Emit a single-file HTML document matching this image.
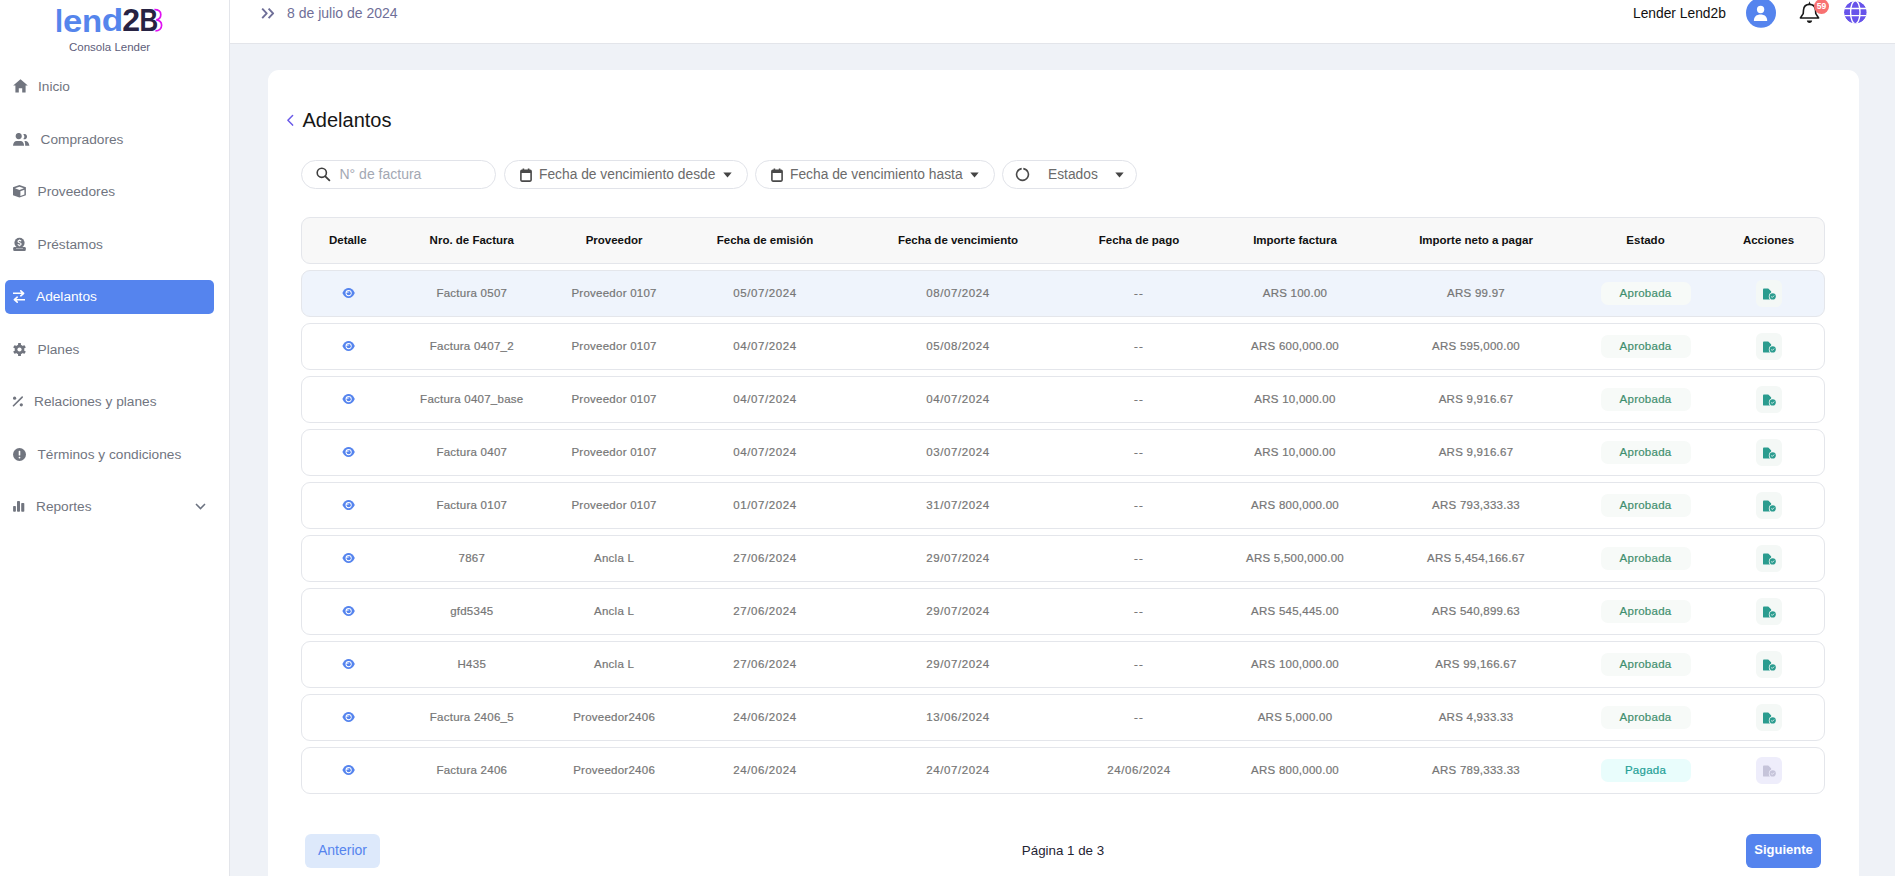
<!DOCTYPE html>
<html><head><meta charset="utf-8"><style>
html,body{margin:0;padding:0}
body{width:1895px;height:876px;overflow:hidden;position:relative;background:#eff2f7;font-family:"Liberation Sans",sans-serif}
.t{position:absolute;white-space:nowrap}
#sidebar{position:absolute;left:0;top:0;width:229px;height:876px;background:#fff;border-right:1px solid #e3e5ea}
#header{position:absolute;left:230px;top:0;width:1665px;height:43px;background:#fff;border-bottom:1px solid #e3e5ea}
#card{position:absolute;left:268px;top:70px;width:1591px;height:860px;background:#fff;border-radius:11px}
</style></head><body>
<div id="sidebar">
<svg style="position:absolute;left:0;top:0" width="229" height="40" viewBox="0 0 229 40"><path d="M154.3 9.7 C158.5 9.7 160.8 11.6 160.8 14.6 C160.8 17.5 158.8 19.6 156.2 19.9 C159.5 20.3 161.6 22.2 161.6 25.2 C161.6 28.6 159 30.8 155.4 30.8" fill="none" stroke="#e012f2" stroke-width="1.7"/><text transform="translate(55.04 31.70) scale(0.935 1)" font-family="Liberation Sans" font-weight="bold" font-size="31.20" fill="#5585ec">l</text><text transform="translate(63.07 31.54) scale(1.100 1)" font-family="Liberation Sans" font-weight="bold" font-size="31.44" fill="#5585ec">e</text><text transform="translate(81.96 31.70) scale(1.039 1)" font-family="Liberation Sans" font-weight="bold" font-size="31.74" fill="#5585ec">n</text><text transform="translate(101.72 31.49) scale(1.141 1)" font-family="Liberation Sans" font-weight="bold" font-size="30.84" fill="#5585ec">d</text><text transform="translate(122.18 31.10) scale(1.022 1)" font-family="Liberation Sans" font-weight="bold" font-size="31.39" fill="#272343">2</text><text transform="translate(139.62 31.10) scale(0.813 1)" font-family="Liberation Sans" font-weight="bold" font-size="31.84" fill="#272343" stroke="#fff" stroke-width="0.8" paint-order="stroke">B</text></svg>
<div class="t" style="left:69px;top:39.83px;font-size:11.5px;line-height:14.38px;color:#5d5d7a;">Consola Lender</div>
<svg style="position:absolute;left:13px;top:79px" width="15" height="14" viewBox="0 0 15 14"><path d="M7.5 0.3 L14.8 6.6 L12.6 6.6 L12.6 13.6 L9.2 13.6 L9.2 9.2 L5.8 9.2 L5.8 13.6 L2.4 13.6 L2.4 6.6 L0.2 6.6 Z" fill="#71757f"/></svg>
<div class="t" style="left:38px;top:77.69px;font-size:13.7px;line-height:17.12px;color:#71757f;">Inicio</div>
<svg style="position:absolute;left:13px;top:133px" width="17" height="13" viewBox="0 0 17 13"><circle cx="5.7" cy="3.05" r="3.1" fill="#71757f"/><path d="M0 12.8 C0.2 9.5 1.6 8 3.6 8 H7.6 C9.6 8 10.9 9.5 11.1 12.8 Z" fill="#71757f"/><path d="M10.2 1.2 A2.7 2.7 0 1 1 10.2 6.1 C11 5.4 11.4 4.6 11.4 3.65 C11.4 2.7 11 1.9 10.2 1.2 Z" fill="#71757f"/><path d="M11.4 8 H12.4 C14.5 8 16 9.5 16.4 12.8 H12.2 C12.2 10.5 12 9 11.4 8 Z" fill="#71757f"/></svg>
<div class="t" style="left:40.5px;top:130.69px;font-size:13.7px;line-height:17.12px;color:#71757f;">Compradores</div>
<svg style="position:absolute;left:13px;top:185px" width="13" height="13" viewBox="0 0 13 13"><path d="M6.45 0.1 L12.9 2.3 L12.9 10.2 L6.45 12.6 L0 10.2 L0 2.3 Z" fill="#71757f"/><path d="M6.45 1.8 L10.9 3.3 L6.45 4.9 L2 3.3 Z" fill="#fff"/><path d="M7.4 6.3 L11.4 4.7 L11.4 9.4 L7.4 11.1 Z" fill="#fff"/></svg>
<div class="t" style="left:37.5px;top:182.69px;font-size:13.7px;line-height:17.12px;color:#71757f;">Proveedores</div>
<svg style="position:absolute;left:13px;top:237px" width="13" height="14" viewBox="0 0 13 14"><circle cx="6.5" cy="5.8" r="5.1" fill="#71757f"/><path d="M8.1 4.3 C7.8 3.7 7.2 3.4 6.5 3.4 C5.6 3.4 5 3.9 5 4.6 C5 6.1 8.1 5.5 8.1 7.1 C8.1 7.8 7.4 8.3 6.5 8.3 C5.7 8.3 5.1 7.9 4.8 7.3 M6.5 2.5 V3.4 M6.5 8.3 V9.3" fill="none" stroke="#fff" stroke-width="1.2"/><rect x="0.2" y="10" width="12.6" height="4" rx="1.2" fill="#71757f"/><path d="M3 11.5 H10" stroke="#fff" stroke-width="0.7" opacity="0.6"/></svg>
<div class="t" style="left:37.5px;top:235.69px;font-size:13.7px;line-height:17.12px;color:#71757f;">Préstamos</div>
<div style="position:absolute;left:5px;top:280px;width:209px;height:34px;border-radius:5px;background:#5584ee"></div>
<svg style="position:absolute;left:13px;top:290px" width="12" height="13" viewBox="0 0 12 13"><path d="M0.5 3.3 H10.5 M7.8 0.8 L10.6 3.3 L7.8 5.8 M11.5 9.7 H1.5 M4.2 7.2 L1.4 9.7 L4.2 12.2" fill="none" stroke="#fff" stroke-width="1.6" stroke-linecap="round" stroke-linejoin="round"/></svg>
<div class="t" style="left:36px;top:287.69px;font-size:13.7px;line-height:17.12px;color:#fff;">Adelantos</div>
<svg style="position:absolute;left:13px;top:343px" width="13" height="13" viewBox="0 0 13 13"><g transform="translate(6.5 6.5)" fill="#71757f"><circle r="4.8"/><rect x="-1.45" y="-6.5" width="2.9" height="13" rx="0.5"/><rect x="-1.45" y="-6.5" width="2.9" height="13" rx="0.5" transform="rotate(60)"/><rect x="-1.45" y="-6.5" width="2.9" height="13" rx="0.5" transform="rotate(120)"/><circle r="2.1" fill="#fff"/></g></svg>
<div class="t" style="left:37.5px;top:340.69px;font-size:13.7px;line-height:17.12px;color:#71757f;">Planes</div>
<svg style="position:absolute;left:12px;top:396px" width="12" height="11" viewBox="0 0 12 11"><path d="M10.2 1.1 L1.5 9.75" stroke="#71757f" stroke-width="1.6" stroke-linecap="round"/><circle cx="2.6" cy="2.2" r="1.6" fill="#71757f"/><circle cx="9.3" cy="8.8" r="1.6" fill="#71757f"/></svg>
<div class="t" style="left:34px;top:392.69px;font-size:13.7px;line-height:17.12px;color:#71757f;">Relaciones y planes</div>
<svg style="position:absolute;left:13px;top:448px" width="13" height="13" viewBox="0 0 13 13"><circle cx="6.5" cy="6.5" r="6.5" fill="#71757f"/><rect x="5.7" y="2.8" width="1.6" height="4.8" rx="0.6" fill="#fff"/><circle cx="6.5" cy="9.6" r="0.9" fill="#fff"/></svg>
<div class="t" style="left:37.5px;top:445.69px;font-size:13.7px;line-height:17.12px;color:#71757f;">Términos y condiciones</div>
<svg style="position:absolute;left:13px;top:501px" width="12" height="11" viewBox="0 0 12 11"><rect x="0.1" y="5" width="2.8" height="5.7" rx="0.8" fill="#71757f"/><rect x="4" y="0" width="3" height="10.7" rx="0.8" fill="#71757f"/><rect x="8.2" y="1.9" width="3.1" height="8.8" rx="0.8" fill="#71757f"/></svg>
<div class="t" style="left:36px;top:497.69px;font-size:13.7px;line-height:17.12px;color:#71757f;">Reportes</div>
<svg style="position:absolute;left:195px;top:503px" width="11" height="7" viewBox="0 0 11 7"><path d="M1 1 L5.5 5.6 L10 1" fill="none" stroke="#6b7280" stroke-width="1.5"/></svg>
</div>
<div id="header">
</div>
<svg style="position:absolute;left:261px;top:8px" width="14" height="11" viewBox="0 0 14 11"><path d="M1.2 0.6 L5.7 5.4 L1.2 10.2 M7.6 0.6 L12.1 5.4 L7.6 10.2" fill="none" stroke="#6f6f98" stroke-width="1.9" stroke-linejoin="round"/></svg>
<div class="t" style="left:287px;top:5.40px;font-size:14px;line-height:17.5px;color:#6f6f98;">8 de julio de 2024</div>
<div class="t" style="left:1633px;top:4.59px;font-size:13.8px;line-height:17.25px;color:#111;">Lender Lend2b</div>
<svg style="position:absolute;left:1746px;top:-2px" width="30" height="30" viewBox="0 0 30 30"><circle cx="15" cy="14.8" r="15" fill="#5584ee"/><circle cx="14.6" cy="11.5" r="3.65" fill="#fff"/><path d="M7.9 23 C7.9 18.6 10.6 16.6 14.55 16.6 C18.5 16.6 21.2 18.6 21.2 23 Z" fill="#fff"/></svg>
<svg style="position:absolute;left:1799px;top:0px" width="22" height="24" viewBox="0 0 22 24"><path d="M9.3 4.6 L10.5 1.2 L11.7 4.6 Z" fill="#1a1a1a"/><path d="M10.5 4.4 C6.9 4.4 4.8 6.8 4.5 10 L4.2 13.6 L1.4 17.95 H19.6 L16.8 13.6 L16.5 10 C16.2 6.8 14.1 4.4 10.5 4.4 Z" fill="none" stroke="#1a1a1a" stroke-width="1.6" stroke-linejoin="round"/><path d="M7.9 20.4 H13.1 C13.1 21.8 12 22.9 10.5 22.9 C9 22.9 7.9 21.8 7.9 20.4 Z" fill="#1a1a1a"/></svg>
<div style="position:absolute;left:1814px;top:-1px;width:15px;height:15px;border-radius:50%;background:#f87171"></div>
<div class="t" style="left:1814px;top:0px;width:15px;text-align:center;font-size:8.5px;line-height:12px;color:#fff;font-weight:bold">59</div>
<svg style="position:absolute;left:1844px;top:1px" width="23" height="23" viewBox="0 0 23 23"><defs><clipPath id="gc"><circle cx="11.4" cy="11.3" r="11.35"/></clipPath></defs><g clip-path="url(#gc)"><circle cx="11.4" cy="11.3" r="11.35" fill="#6753ea"/><path d="M0 7.5 H23 M0 14.65 H23" stroke="#fff" stroke-width="1.4"/><ellipse cx="11.3" cy="11.3" rx="4.7" ry="11.6" fill="none" stroke="#fff" stroke-width="1.4"/></g></svg>
<div id="card"></div>
<svg style="position:absolute;left:286px;top:114px" width="9" height="13" viewBox="0 0 9 13"><path d="M6.6 1.5 L1.9 6.3 L6.6 11.1" fill="none" stroke="#6a5ae8" stroke-width="1.5" stroke-linecap="round" stroke-linejoin="round"/></svg>
<div class="t" style="left:302.5px;top:108.07px;font-size:20px;line-height:25.0px;color:#161616;">Adelantos</div>
<div style="position:absolute;top:160px;height:27px;border:1px solid #e1e3e9;border-radius:15px;background:#fff;left:301px;width:193px"></div>
<svg style="position:absolute;left:316px;top:167px" width="15" height="15" viewBox="0 0 15 15"><circle cx="5.8" cy="5.8" r="4.6" fill="none" stroke="#3f3f3f" stroke-width="1.6"/><path d="M9.3 9.3 L13.4 13.4" stroke="#3f3f3f" stroke-width="1.8" stroke-linecap="round"/></svg>
<div class="t" style="left:339.5px;top:166.00px;font-size:14px;line-height:17.5px;color:#a3a8b3;">N° de factura</div>
<div style="position:absolute;top:160px;height:27px;border:1px solid #e1e3e9;border-radius:15px;background:#fff;left:504px;width:242px"></div>
<svg style="position:absolute;left:520px;top:168px" width="12" height="14" viewBox="0 0 12 14"><rect x="0.9" y="2.4" width="10.2" height="10.7" rx="1" fill="none" stroke="#4a4a4a" stroke-width="1.6"/><rect x="0.9" y="2.4" width="10.2" height="2.6" fill="#4a4a4a"/><rect x="2.6" y="0.5" width="1.6" height="3" fill="#4a4a4a"/><rect x="7.8" y="0.5" width="1.6" height="3" fill="#4a4a4a"/></svg>
<div class="t" style="left:539px;top:165.69px;font-size:13.8px;line-height:17.25px;color:#6b6b6b;">Fecha de vencimiento desde</div>
<svg style="position:absolute;left:723px;top:172px" width="9" height="6" viewBox="0 0 9 6"><path d="M0.3 0.5 H8.7 L4.5 5.5 Z" fill="#444"/></svg>
<div style="position:absolute;top:160px;height:27px;border:1px solid #e1e3e9;border-radius:15px;background:#fff;left:755px;width:238px"></div>
<svg style="position:absolute;left:771px;top:168px" width="12" height="14" viewBox="0 0 12 14"><rect x="0.9" y="2.4" width="10.2" height="10.7" rx="1" fill="none" stroke="#4a4a4a" stroke-width="1.6"/><rect x="0.9" y="2.4" width="10.2" height="2.6" fill="#4a4a4a"/><rect x="2.6" y="0.5" width="1.6" height="3" fill="#4a4a4a"/><rect x="7.8" y="0.5" width="1.6" height="3" fill="#4a4a4a"/></svg>
<div class="t" style="left:790px;top:165.69px;font-size:13.8px;line-height:17.25px;color:#6b6b6b;">Fecha de vencimiento hasta</div>
<svg style="position:absolute;left:970px;top:172px" width="9" height="6" viewBox="0 0 9 6"><path d="M0.3 0.5 H8.7 L4.5 5.5 Z" fill="#444"/></svg>
<div style="position:absolute;top:160px;height:27px;border:1px solid #e1e3e9;border-radius:15px;background:#fff;left:1002px;width:133px"></div>
<svg style="position:absolute;left:1015px;top:167px" width="15" height="15" viewBox="0 0 15 15"><path d="M8.3 1.6 A5.9 5.9 0 1 1 6.7 1.6" fill="none" stroke="#4a4a4a" stroke-width="1.6"/></svg>
<div class="t" style="left:1048px;top:165.69px;font-size:13.8px;line-height:17.25px;color:#6b6b6b;">Estados</div>
<svg style="position:absolute;left:1115px;top:172px" width="9" height="6" viewBox="0 0 9 6"><path d="M0.3 0.5 H8.7 L4.5 5.5 Z" fill="#444"/></svg>
<div style="position:absolute;left:301px;top:217px;width:1522px;height:45px;border:1px solid #e4e6eb;border-radius:9px;background:#f8f8f8"></div>
<div class="t" style="left:247.8px;width:200px;text-align:center;top:232.83px;font-size:11.5px;line-height:14.38px;color:#111;font-weight:bold;">Detalle</div>
<div class="t" style="left:371.8px;width:200px;text-align:center;top:232.83px;font-size:11.5px;line-height:14.38px;color:#111;font-weight:bold;">Nro. de Factura</div>
<div class="t" style="left:514.1px;width:200px;text-align:center;top:232.83px;font-size:11.5px;line-height:14.38px;color:#111;font-weight:bold;">Proveedor</div>
<div class="t" style="left:665.0px;width:200px;text-align:center;top:232.83px;font-size:11.5px;line-height:14.38px;color:#111;font-weight:bold;">Fecha de emisión</div>
<div class="t" style="left:858.0px;width:200px;text-align:center;top:232.83px;font-size:11.5px;line-height:14.38px;color:#111;font-weight:bold;">Fecha de vencimiento</div>
<div class="t" style="left:1039.0px;width:200px;text-align:center;top:232.83px;font-size:11.5px;line-height:14.38px;color:#111;font-weight:bold;">Fecha de pago</div>
<div class="t" style="left:1195.0px;width:200px;text-align:center;top:232.83px;font-size:11.5px;line-height:14.38px;color:#111;font-weight:bold;">Importe factura</div>
<div class="t" style="left:1376.0px;width:200px;text-align:center;top:232.83px;font-size:11.5px;line-height:14.38px;color:#111;font-weight:bold;">Importe neto a pagar</div>
<div class="t" style="left:1545.5px;width:200px;text-align:center;top:232.83px;font-size:11.5px;line-height:14.38px;color:#111;font-weight:bold;">Estado</div>
<div class="t" style="left:1668.5px;width:200px;text-align:center;top:232.83px;font-size:11.5px;line-height:14.38px;color:#111;font-weight:bold;">Acciones</div>
<div style="position:absolute;left:301px;top:270px;width:1522px;height:45px;border:1px solid #e4e6eb;border-radius:9px;background:#eff4fc"></div>
<svg style="position:absolute;left:341.8px;top:287.5px" width="14" height="11" viewBox="0 0 14 11"><path d="M0.4 5.1 C1.9 1.9 4.1 0.1 6.6 0.1 C9.1 0.1 11.3 1.9 12.8 5.1 C11.3 8.3 9.1 10.1 6.6 10.1 C4.1 10.1 1.9 8.3 0.4 5.1 Z" fill="#5584ee"/><circle cx="6.6" cy="5.1" r="3.1" fill="#fff"/><circle cx="6.7" cy="5.2" r="2.1" fill="#5584ee"/><path d="M4.6 5.1 A2 2 0 0 1 6.6 3.1 L6.6 5.1 Z" fill="#fff" opacity="0.55"/></svg>
<div class="t" style="left:371.8px;width:200px;text-align:center;top:285.83px;font-size:11.5px;line-height:14.38px;color:#767676;letter-spacing:0.25px;-webkit-text-stroke:0.2px #767676;">Factura 0507</div>
<div class="t" style="left:514.1px;width:200px;text-align:center;top:285.83px;font-size:11.5px;line-height:14.38px;color:#767676;letter-spacing:0.25px;-webkit-text-stroke:0.2px #767676;">Proveedor 0107</div>
<div class="t" style="left:665.0px;width:200px;text-align:center;top:285.83px;font-size:11.5px;line-height:14.38px;color:#767676;letter-spacing:0.6px;-webkit-text-stroke:0.2px #767676;">05/07/2024</div>
<div class="t" style="left:858.0px;width:200px;text-align:center;top:285.83px;font-size:11.5px;line-height:14.38px;color:#767676;letter-spacing:0.6px;-webkit-text-stroke:0.2px #767676;">08/07/2024</div>
<div class="t" style="left:1039.0px;width:200px;text-align:center;top:285.83px;font-size:11.5px;line-height:14.38px;color:#767676;letter-spacing:1.2px;-webkit-text-stroke:0.2px #767676;">--</div>
<div class="t" style="left:1195.0px;width:200px;text-align:center;top:285.83px;font-size:11.5px;line-height:14.38px;color:#767676;letter-spacing:0.25px;-webkit-text-stroke:0.2px #767676;">ARS 100.00</div>
<div class="t" style="left:1376.0px;width:200px;text-align:center;top:285.83px;font-size:11.5px;line-height:14.38px;color:#767676;letter-spacing:0.25px;-webkit-text-stroke:0.2px #767676;">ARS 99.97</div>
<div style="position:absolute;left:1601px;top:282px;width:90px;height:23px;border-radius:7px;background:#f7faf8"></div>
<div class="t" style="left:1600.5px;width:90px;text-align:center;top:285.83px;font-size:11.5px;line-height:14.38px;color:#3f8f6e;letter-spacing:0.25px;-webkit-text-stroke:0.2px #3f8f6e;">Aprobada</div>
<div style="position:absolute;left:1756px;top:280px;width:26px;height:27px;border-radius:6px;background:#f4f8f6"></div>
<svg style="position:absolute;left:1763px;top:287.5px" width="14" height="13" viewBox="0 0 14 13"><path d="M0.9 0.5 H5.6 L8.1 3 V11.6 H0.9 Q0 11.6 0 10.7 V1.4 Q0 0.5 0.9 0.5 Z" fill="#2b9c8f"/><path d="M5.5 0.2 L8.4 3.1" stroke="#f4f8f6" stroke-width="0.8"/><circle cx="9.7" cy="8.4" r="3.9" fill="#f4f8f6"/><circle cx="9.7" cy="8.4" r="3.1" fill="#2b9c8f"/><path d="M8.3 8.6 L9.3 9.4 L11.1 7.6" fill="none" stroke="#f4f8f6" stroke-width="0.9"/></svg>
<div style="position:absolute;left:301px;top:323px;width:1522px;height:45px;border:1px solid #e4e6eb;border-radius:9px;background:#fff"></div>
<svg style="position:absolute;left:341.8px;top:340.5px" width="14" height="11" viewBox="0 0 14 11"><path d="M0.4 5.1 C1.9 1.9 4.1 0.1 6.6 0.1 C9.1 0.1 11.3 1.9 12.8 5.1 C11.3 8.3 9.1 10.1 6.6 10.1 C4.1 10.1 1.9 8.3 0.4 5.1 Z" fill="#5584ee"/><circle cx="6.6" cy="5.1" r="3.1" fill="#fff"/><circle cx="6.7" cy="5.2" r="2.1" fill="#5584ee"/><path d="M4.6 5.1 A2 2 0 0 1 6.6 3.1 L6.6 5.1 Z" fill="#fff" opacity="0.55"/></svg>
<div class="t" style="left:371.8px;width:200px;text-align:center;top:338.83px;font-size:11.5px;line-height:14.38px;color:#767676;letter-spacing:0.25px;-webkit-text-stroke:0.2px #767676;">Factura 0407_2</div>
<div class="t" style="left:514.1px;width:200px;text-align:center;top:338.83px;font-size:11.5px;line-height:14.38px;color:#767676;letter-spacing:0.25px;-webkit-text-stroke:0.2px #767676;">Proveedor 0107</div>
<div class="t" style="left:665.0px;width:200px;text-align:center;top:338.83px;font-size:11.5px;line-height:14.38px;color:#767676;letter-spacing:0.6px;-webkit-text-stroke:0.2px #767676;">04/07/2024</div>
<div class="t" style="left:858.0px;width:200px;text-align:center;top:338.83px;font-size:11.5px;line-height:14.38px;color:#767676;letter-spacing:0.6px;-webkit-text-stroke:0.2px #767676;">05/08/2024</div>
<div class="t" style="left:1039.0px;width:200px;text-align:center;top:338.83px;font-size:11.5px;line-height:14.38px;color:#767676;letter-spacing:1.2px;-webkit-text-stroke:0.2px #767676;">--</div>
<div class="t" style="left:1195.0px;width:200px;text-align:center;top:338.83px;font-size:11.5px;line-height:14.38px;color:#767676;letter-spacing:0.25px;-webkit-text-stroke:0.2px #767676;">ARS 600,000.00</div>
<div class="t" style="left:1376.0px;width:200px;text-align:center;top:338.83px;font-size:11.5px;line-height:14.38px;color:#767676;letter-spacing:0.25px;-webkit-text-stroke:0.2px #767676;">ARS 595,000.00</div>
<div style="position:absolute;left:1601px;top:335px;width:90px;height:23px;border-radius:7px;background:#f7faf8"></div>
<div class="t" style="left:1600.5px;width:90px;text-align:center;top:338.83px;font-size:11.5px;line-height:14.38px;color:#3f8f6e;letter-spacing:0.25px;-webkit-text-stroke:0.2px #3f8f6e;">Aprobada</div>
<div style="position:absolute;left:1756px;top:333px;width:26px;height:27px;border-radius:6px;background:#f4f8f6"></div>
<svg style="position:absolute;left:1763px;top:340.5px" width="14" height="13" viewBox="0 0 14 13"><path d="M0.9 0.5 H5.6 L8.1 3 V11.6 H0.9 Q0 11.6 0 10.7 V1.4 Q0 0.5 0.9 0.5 Z" fill="#2b9c8f"/><path d="M5.5 0.2 L8.4 3.1" stroke="#f4f8f6" stroke-width="0.8"/><circle cx="9.7" cy="8.4" r="3.9" fill="#f4f8f6"/><circle cx="9.7" cy="8.4" r="3.1" fill="#2b9c8f"/><path d="M8.3 8.6 L9.3 9.4 L11.1 7.6" fill="none" stroke="#f4f8f6" stroke-width="0.9"/></svg>
<div style="position:absolute;left:301px;top:376px;width:1522px;height:45px;border:1px solid #e4e6eb;border-radius:9px;background:#fff"></div>
<svg style="position:absolute;left:341.8px;top:393.5px" width="14" height="11" viewBox="0 0 14 11"><path d="M0.4 5.1 C1.9 1.9 4.1 0.1 6.6 0.1 C9.1 0.1 11.3 1.9 12.8 5.1 C11.3 8.3 9.1 10.1 6.6 10.1 C4.1 10.1 1.9 8.3 0.4 5.1 Z" fill="#5584ee"/><circle cx="6.6" cy="5.1" r="3.1" fill="#fff"/><circle cx="6.7" cy="5.2" r="2.1" fill="#5584ee"/><path d="M4.6 5.1 A2 2 0 0 1 6.6 3.1 L6.6 5.1 Z" fill="#fff" opacity="0.55"/></svg>
<div class="t" style="left:371.8px;width:200px;text-align:center;top:391.83px;font-size:11.5px;line-height:14.38px;color:#767676;letter-spacing:0.25px;-webkit-text-stroke:0.2px #767676;">Factura 0407_base</div>
<div class="t" style="left:514.1px;width:200px;text-align:center;top:391.83px;font-size:11.5px;line-height:14.38px;color:#767676;letter-spacing:0.25px;-webkit-text-stroke:0.2px #767676;">Proveedor 0107</div>
<div class="t" style="left:665.0px;width:200px;text-align:center;top:391.83px;font-size:11.5px;line-height:14.38px;color:#767676;letter-spacing:0.6px;-webkit-text-stroke:0.2px #767676;">04/07/2024</div>
<div class="t" style="left:858.0px;width:200px;text-align:center;top:391.83px;font-size:11.5px;line-height:14.38px;color:#767676;letter-spacing:0.6px;-webkit-text-stroke:0.2px #767676;">04/07/2024</div>
<div class="t" style="left:1039.0px;width:200px;text-align:center;top:391.83px;font-size:11.5px;line-height:14.38px;color:#767676;letter-spacing:1.2px;-webkit-text-stroke:0.2px #767676;">--</div>
<div class="t" style="left:1195.0px;width:200px;text-align:center;top:391.83px;font-size:11.5px;line-height:14.38px;color:#767676;letter-spacing:0.25px;-webkit-text-stroke:0.2px #767676;">ARS 10,000.00</div>
<div class="t" style="left:1376.0px;width:200px;text-align:center;top:391.83px;font-size:11.5px;line-height:14.38px;color:#767676;letter-spacing:0.25px;-webkit-text-stroke:0.2px #767676;">ARS 9,916.67</div>
<div style="position:absolute;left:1601px;top:388px;width:90px;height:23px;border-radius:7px;background:#f7faf8"></div>
<div class="t" style="left:1600.5px;width:90px;text-align:center;top:391.83px;font-size:11.5px;line-height:14.38px;color:#3f8f6e;letter-spacing:0.25px;-webkit-text-stroke:0.2px #3f8f6e;">Aprobada</div>
<div style="position:absolute;left:1756px;top:386px;width:26px;height:27px;border-radius:6px;background:#f4f8f6"></div>
<svg style="position:absolute;left:1763px;top:393.5px" width="14" height="13" viewBox="0 0 14 13"><path d="M0.9 0.5 H5.6 L8.1 3 V11.6 H0.9 Q0 11.6 0 10.7 V1.4 Q0 0.5 0.9 0.5 Z" fill="#2b9c8f"/><path d="M5.5 0.2 L8.4 3.1" stroke="#f4f8f6" stroke-width="0.8"/><circle cx="9.7" cy="8.4" r="3.9" fill="#f4f8f6"/><circle cx="9.7" cy="8.4" r="3.1" fill="#2b9c8f"/><path d="M8.3 8.6 L9.3 9.4 L11.1 7.6" fill="none" stroke="#f4f8f6" stroke-width="0.9"/></svg>
<div style="position:absolute;left:301px;top:429px;width:1522px;height:45px;border:1px solid #e4e6eb;border-radius:9px;background:#fff"></div>
<svg style="position:absolute;left:341.8px;top:446.5px" width="14" height="11" viewBox="0 0 14 11"><path d="M0.4 5.1 C1.9 1.9 4.1 0.1 6.6 0.1 C9.1 0.1 11.3 1.9 12.8 5.1 C11.3 8.3 9.1 10.1 6.6 10.1 C4.1 10.1 1.9 8.3 0.4 5.1 Z" fill="#5584ee"/><circle cx="6.6" cy="5.1" r="3.1" fill="#fff"/><circle cx="6.7" cy="5.2" r="2.1" fill="#5584ee"/><path d="M4.6 5.1 A2 2 0 0 1 6.6 3.1 L6.6 5.1 Z" fill="#fff" opacity="0.55"/></svg>
<div class="t" style="left:371.8px;width:200px;text-align:center;top:444.83px;font-size:11.5px;line-height:14.38px;color:#767676;letter-spacing:0.25px;-webkit-text-stroke:0.2px #767676;">Factura 0407</div>
<div class="t" style="left:514.1px;width:200px;text-align:center;top:444.83px;font-size:11.5px;line-height:14.38px;color:#767676;letter-spacing:0.25px;-webkit-text-stroke:0.2px #767676;">Proveedor 0107</div>
<div class="t" style="left:665.0px;width:200px;text-align:center;top:444.83px;font-size:11.5px;line-height:14.38px;color:#767676;letter-spacing:0.6px;-webkit-text-stroke:0.2px #767676;">04/07/2024</div>
<div class="t" style="left:858.0px;width:200px;text-align:center;top:444.83px;font-size:11.5px;line-height:14.38px;color:#767676;letter-spacing:0.6px;-webkit-text-stroke:0.2px #767676;">03/07/2024</div>
<div class="t" style="left:1039.0px;width:200px;text-align:center;top:444.83px;font-size:11.5px;line-height:14.38px;color:#767676;letter-spacing:1.2px;-webkit-text-stroke:0.2px #767676;">--</div>
<div class="t" style="left:1195.0px;width:200px;text-align:center;top:444.83px;font-size:11.5px;line-height:14.38px;color:#767676;letter-spacing:0.25px;-webkit-text-stroke:0.2px #767676;">ARS 10,000.00</div>
<div class="t" style="left:1376.0px;width:200px;text-align:center;top:444.83px;font-size:11.5px;line-height:14.38px;color:#767676;letter-spacing:0.25px;-webkit-text-stroke:0.2px #767676;">ARS 9,916.67</div>
<div style="position:absolute;left:1601px;top:441px;width:90px;height:23px;border-radius:7px;background:#f7faf8"></div>
<div class="t" style="left:1600.5px;width:90px;text-align:center;top:444.83px;font-size:11.5px;line-height:14.38px;color:#3f8f6e;letter-spacing:0.25px;-webkit-text-stroke:0.2px #3f8f6e;">Aprobada</div>
<div style="position:absolute;left:1756px;top:439px;width:26px;height:27px;border-radius:6px;background:#f4f8f6"></div>
<svg style="position:absolute;left:1763px;top:446.5px" width="14" height="13" viewBox="0 0 14 13"><path d="M0.9 0.5 H5.6 L8.1 3 V11.6 H0.9 Q0 11.6 0 10.7 V1.4 Q0 0.5 0.9 0.5 Z" fill="#2b9c8f"/><path d="M5.5 0.2 L8.4 3.1" stroke="#f4f8f6" stroke-width="0.8"/><circle cx="9.7" cy="8.4" r="3.9" fill="#f4f8f6"/><circle cx="9.7" cy="8.4" r="3.1" fill="#2b9c8f"/><path d="M8.3 8.6 L9.3 9.4 L11.1 7.6" fill="none" stroke="#f4f8f6" stroke-width="0.9"/></svg>
<div style="position:absolute;left:301px;top:482px;width:1522px;height:45px;border:1px solid #e4e6eb;border-radius:9px;background:#fff"></div>
<svg style="position:absolute;left:341.8px;top:499.5px" width="14" height="11" viewBox="0 0 14 11"><path d="M0.4 5.1 C1.9 1.9 4.1 0.1 6.6 0.1 C9.1 0.1 11.3 1.9 12.8 5.1 C11.3 8.3 9.1 10.1 6.6 10.1 C4.1 10.1 1.9 8.3 0.4 5.1 Z" fill="#5584ee"/><circle cx="6.6" cy="5.1" r="3.1" fill="#fff"/><circle cx="6.7" cy="5.2" r="2.1" fill="#5584ee"/><path d="M4.6 5.1 A2 2 0 0 1 6.6 3.1 L6.6 5.1 Z" fill="#fff" opacity="0.55"/></svg>
<div class="t" style="left:371.8px;width:200px;text-align:center;top:497.83px;font-size:11.5px;line-height:14.38px;color:#767676;letter-spacing:0.25px;-webkit-text-stroke:0.2px #767676;">Factura 0107</div>
<div class="t" style="left:514.1px;width:200px;text-align:center;top:497.83px;font-size:11.5px;line-height:14.38px;color:#767676;letter-spacing:0.25px;-webkit-text-stroke:0.2px #767676;">Proveedor 0107</div>
<div class="t" style="left:665.0px;width:200px;text-align:center;top:497.83px;font-size:11.5px;line-height:14.38px;color:#767676;letter-spacing:0.6px;-webkit-text-stroke:0.2px #767676;">01/07/2024</div>
<div class="t" style="left:858.0px;width:200px;text-align:center;top:497.83px;font-size:11.5px;line-height:14.38px;color:#767676;letter-spacing:0.6px;-webkit-text-stroke:0.2px #767676;">31/07/2024</div>
<div class="t" style="left:1039.0px;width:200px;text-align:center;top:497.83px;font-size:11.5px;line-height:14.38px;color:#767676;letter-spacing:1.2px;-webkit-text-stroke:0.2px #767676;">--</div>
<div class="t" style="left:1195.0px;width:200px;text-align:center;top:497.83px;font-size:11.5px;line-height:14.38px;color:#767676;letter-spacing:0.25px;-webkit-text-stroke:0.2px #767676;">ARS 800,000.00</div>
<div class="t" style="left:1376.0px;width:200px;text-align:center;top:497.83px;font-size:11.5px;line-height:14.38px;color:#767676;letter-spacing:0.25px;-webkit-text-stroke:0.2px #767676;">ARS 793,333.33</div>
<div style="position:absolute;left:1601px;top:494px;width:90px;height:23px;border-radius:7px;background:#f7faf8"></div>
<div class="t" style="left:1600.5px;width:90px;text-align:center;top:497.83px;font-size:11.5px;line-height:14.38px;color:#3f8f6e;letter-spacing:0.25px;-webkit-text-stroke:0.2px #3f8f6e;">Aprobada</div>
<div style="position:absolute;left:1756px;top:492px;width:26px;height:27px;border-radius:6px;background:#f4f8f6"></div>
<svg style="position:absolute;left:1763px;top:499.5px" width="14" height="13" viewBox="0 0 14 13"><path d="M0.9 0.5 H5.6 L8.1 3 V11.6 H0.9 Q0 11.6 0 10.7 V1.4 Q0 0.5 0.9 0.5 Z" fill="#2b9c8f"/><path d="M5.5 0.2 L8.4 3.1" stroke="#f4f8f6" stroke-width="0.8"/><circle cx="9.7" cy="8.4" r="3.9" fill="#f4f8f6"/><circle cx="9.7" cy="8.4" r="3.1" fill="#2b9c8f"/><path d="M8.3 8.6 L9.3 9.4 L11.1 7.6" fill="none" stroke="#f4f8f6" stroke-width="0.9"/></svg>
<div style="position:absolute;left:301px;top:535px;width:1522px;height:45px;border:1px solid #e4e6eb;border-radius:9px;background:#fff"></div>
<svg style="position:absolute;left:341.8px;top:552.5px" width="14" height="11" viewBox="0 0 14 11"><path d="M0.4 5.1 C1.9 1.9 4.1 0.1 6.6 0.1 C9.1 0.1 11.3 1.9 12.8 5.1 C11.3 8.3 9.1 10.1 6.6 10.1 C4.1 10.1 1.9 8.3 0.4 5.1 Z" fill="#5584ee"/><circle cx="6.6" cy="5.1" r="3.1" fill="#fff"/><circle cx="6.7" cy="5.2" r="2.1" fill="#5584ee"/><path d="M4.6 5.1 A2 2 0 0 1 6.6 3.1 L6.6 5.1 Z" fill="#fff" opacity="0.55"/></svg>
<div class="t" style="left:371.8px;width:200px;text-align:center;top:550.83px;font-size:11.5px;line-height:14.38px;color:#767676;letter-spacing:0.25px;-webkit-text-stroke:0.2px #767676;">7867</div>
<div class="t" style="left:514.1px;width:200px;text-align:center;top:550.83px;font-size:11.5px;line-height:14.38px;color:#767676;letter-spacing:0.25px;-webkit-text-stroke:0.2px #767676;">Ancla L</div>
<div class="t" style="left:665.0px;width:200px;text-align:center;top:550.83px;font-size:11.5px;line-height:14.38px;color:#767676;letter-spacing:0.6px;-webkit-text-stroke:0.2px #767676;">27/06/2024</div>
<div class="t" style="left:858.0px;width:200px;text-align:center;top:550.83px;font-size:11.5px;line-height:14.38px;color:#767676;letter-spacing:0.6px;-webkit-text-stroke:0.2px #767676;">29/07/2024</div>
<div class="t" style="left:1039.0px;width:200px;text-align:center;top:550.83px;font-size:11.5px;line-height:14.38px;color:#767676;letter-spacing:1.2px;-webkit-text-stroke:0.2px #767676;">--</div>
<div class="t" style="left:1195.0px;width:200px;text-align:center;top:550.83px;font-size:11.5px;line-height:14.38px;color:#767676;letter-spacing:0.25px;-webkit-text-stroke:0.2px #767676;">ARS 5,500,000.00</div>
<div class="t" style="left:1376.0px;width:200px;text-align:center;top:550.83px;font-size:11.5px;line-height:14.38px;color:#767676;letter-spacing:0.25px;-webkit-text-stroke:0.2px #767676;">ARS 5,454,166.67</div>
<div style="position:absolute;left:1601px;top:547px;width:90px;height:23px;border-radius:7px;background:#f7faf8"></div>
<div class="t" style="left:1600.5px;width:90px;text-align:center;top:550.83px;font-size:11.5px;line-height:14.38px;color:#3f8f6e;letter-spacing:0.25px;-webkit-text-stroke:0.2px #3f8f6e;">Aprobada</div>
<div style="position:absolute;left:1756px;top:545px;width:26px;height:27px;border-radius:6px;background:#f4f8f6"></div>
<svg style="position:absolute;left:1763px;top:552.5px" width="14" height="13" viewBox="0 0 14 13"><path d="M0.9 0.5 H5.6 L8.1 3 V11.6 H0.9 Q0 11.6 0 10.7 V1.4 Q0 0.5 0.9 0.5 Z" fill="#2b9c8f"/><path d="M5.5 0.2 L8.4 3.1" stroke="#f4f8f6" stroke-width="0.8"/><circle cx="9.7" cy="8.4" r="3.9" fill="#f4f8f6"/><circle cx="9.7" cy="8.4" r="3.1" fill="#2b9c8f"/><path d="M8.3 8.6 L9.3 9.4 L11.1 7.6" fill="none" stroke="#f4f8f6" stroke-width="0.9"/></svg>
<div style="position:absolute;left:301px;top:588px;width:1522px;height:45px;border:1px solid #e4e6eb;border-radius:9px;background:#fff"></div>
<svg style="position:absolute;left:341.8px;top:605.5px" width="14" height="11" viewBox="0 0 14 11"><path d="M0.4 5.1 C1.9 1.9 4.1 0.1 6.6 0.1 C9.1 0.1 11.3 1.9 12.8 5.1 C11.3 8.3 9.1 10.1 6.6 10.1 C4.1 10.1 1.9 8.3 0.4 5.1 Z" fill="#5584ee"/><circle cx="6.6" cy="5.1" r="3.1" fill="#fff"/><circle cx="6.7" cy="5.2" r="2.1" fill="#5584ee"/><path d="M4.6 5.1 A2 2 0 0 1 6.6 3.1 L6.6 5.1 Z" fill="#fff" opacity="0.55"/></svg>
<div class="t" style="left:371.8px;width:200px;text-align:center;top:603.83px;font-size:11.5px;line-height:14.38px;color:#767676;letter-spacing:0.25px;-webkit-text-stroke:0.2px #767676;">gfd5345</div>
<div class="t" style="left:514.1px;width:200px;text-align:center;top:603.83px;font-size:11.5px;line-height:14.38px;color:#767676;letter-spacing:0.25px;-webkit-text-stroke:0.2px #767676;">Ancla L</div>
<div class="t" style="left:665.0px;width:200px;text-align:center;top:603.83px;font-size:11.5px;line-height:14.38px;color:#767676;letter-spacing:0.6px;-webkit-text-stroke:0.2px #767676;">27/06/2024</div>
<div class="t" style="left:858.0px;width:200px;text-align:center;top:603.83px;font-size:11.5px;line-height:14.38px;color:#767676;letter-spacing:0.6px;-webkit-text-stroke:0.2px #767676;">29/07/2024</div>
<div class="t" style="left:1039.0px;width:200px;text-align:center;top:603.83px;font-size:11.5px;line-height:14.38px;color:#767676;letter-spacing:1.2px;-webkit-text-stroke:0.2px #767676;">--</div>
<div class="t" style="left:1195.0px;width:200px;text-align:center;top:603.83px;font-size:11.5px;line-height:14.38px;color:#767676;letter-spacing:0.25px;-webkit-text-stroke:0.2px #767676;">ARS 545,445.00</div>
<div class="t" style="left:1376.0px;width:200px;text-align:center;top:603.83px;font-size:11.5px;line-height:14.38px;color:#767676;letter-spacing:0.25px;-webkit-text-stroke:0.2px #767676;">ARS 540,899.63</div>
<div style="position:absolute;left:1601px;top:600px;width:90px;height:23px;border-radius:7px;background:#f7faf8"></div>
<div class="t" style="left:1600.5px;width:90px;text-align:center;top:603.83px;font-size:11.5px;line-height:14.38px;color:#3f8f6e;letter-spacing:0.25px;-webkit-text-stroke:0.2px #3f8f6e;">Aprobada</div>
<div style="position:absolute;left:1756px;top:598px;width:26px;height:27px;border-radius:6px;background:#f4f8f6"></div>
<svg style="position:absolute;left:1763px;top:605.5px" width="14" height="13" viewBox="0 0 14 13"><path d="M0.9 0.5 H5.6 L8.1 3 V11.6 H0.9 Q0 11.6 0 10.7 V1.4 Q0 0.5 0.9 0.5 Z" fill="#2b9c8f"/><path d="M5.5 0.2 L8.4 3.1" stroke="#f4f8f6" stroke-width="0.8"/><circle cx="9.7" cy="8.4" r="3.9" fill="#f4f8f6"/><circle cx="9.7" cy="8.4" r="3.1" fill="#2b9c8f"/><path d="M8.3 8.6 L9.3 9.4 L11.1 7.6" fill="none" stroke="#f4f8f6" stroke-width="0.9"/></svg>
<div style="position:absolute;left:301px;top:641px;width:1522px;height:45px;border:1px solid #e4e6eb;border-radius:9px;background:#fff"></div>
<svg style="position:absolute;left:341.8px;top:658.5px" width="14" height="11" viewBox="0 0 14 11"><path d="M0.4 5.1 C1.9 1.9 4.1 0.1 6.6 0.1 C9.1 0.1 11.3 1.9 12.8 5.1 C11.3 8.3 9.1 10.1 6.6 10.1 C4.1 10.1 1.9 8.3 0.4 5.1 Z" fill="#5584ee"/><circle cx="6.6" cy="5.1" r="3.1" fill="#fff"/><circle cx="6.7" cy="5.2" r="2.1" fill="#5584ee"/><path d="M4.6 5.1 A2 2 0 0 1 6.6 3.1 L6.6 5.1 Z" fill="#fff" opacity="0.55"/></svg>
<div class="t" style="left:371.8px;width:200px;text-align:center;top:656.83px;font-size:11.5px;line-height:14.38px;color:#767676;letter-spacing:0.25px;-webkit-text-stroke:0.2px #767676;">H435</div>
<div class="t" style="left:514.1px;width:200px;text-align:center;top:656.83px;font-size:11.5px;line-height:14.38px;color:#767676;letter-spacing:0.25px;-webkit-text-stroke:0.2px #767676;">Ancla L</div>
<div class="t" style="left:665.0px;width:200px;text-align:center;top:656.83px;font-size:11.5px;line-height:14.38px;color:#767676;letter-spacing:0.6px;-webkit-text-stroke:0.2px #767676;">27/06/2024</div>
<div class="t" style="left:858.0px;width:200px;text-align:center;top:656.83px;font-size:11.5px;line-height:14.38px;color:#767676;letter-spacing:0.6px;-webkit-text-stroke:0.2px #767676;">29/07/2024</div>
<div class="t" style="left:1039.0px;width:200px;text-align:center;top:656.83px;font-size:11.5px;line-height:14.38px;color:#767676;letter-spacing:1.2px;-webkit-text-stroke:0.2px #767676;">--</div>
<div class="t" style="left:1195.0px;width:200px;text-align:center;top:656.83px;font-size:11.5px;line-height:14.38px;color:#767676;letter-spacing:0.25px;-webkit-text-stroke:0.2px #767676;">ARS 100,000.00</div>
<div class="t" style="left:1376.0px;width:200px;text-align:center;top:656.83px;font-size:11.5px;line-height:14.38px;color:#767676;letter-spacing:0.25px;-webkit-text-stroke:0.2px #767676;">ARS 99,166.67</div>
<div style="position:absolute;left:1601px;top:653px;width:90px;height:23px;border-radius:7px;background:#f7faf8"></div>
<div class="t" style="left:1600.5px;width:90px;text-align:center;top:656.83px;font-size:11.5px;line-height:14.38px;color:#3f8f6e;letter-spacing:0.25px;-webkit-text-stroke:0.2px #3f8f6e;">Aprobada</div>
<div style="position:absolute;left:1756px;top:651px;width:26px;height:27px;border-radius:6px;background:#f4f8f6"></div>
<svg style="position:absolute;left:1763px;top:658.5px" width="14" height="13" viewBox="0 0 14 13"><path d="M0.9 0.5 H5.6 L8.1 3 V11.6 H0.9 Q0 11.6 0 10.7 V1.4 Q0 0.5 0.9 0.5 Z" fill="#2b9c8f"/><path d="M5.5 0.2 L8.4 3.1" stroke="#f4f8f6" stroke-width="0.8"/><circle cx="9.7" cy="8.4" r="3.9" fill="#f4f8f6"/><circle cx="9.7" cy="8.4" r="3.1" fill="#2b9c8f"/><path d="M8.3 8.6 L9.3 9.4 L11.1 7.6" fill="none" stroke="#f4f8f6" stroke-width="0.9"/></svg>
<div style="position:absolute;left:301px;top:694px;width:1522px;height:45px;border:1px solid #e4e6eb;border-radius:9px;background:#fff"></div>
<svg style="position:absolute;left:341.8px;top:711.5px" width="14" height="11" viewBox="0 0 14 11"><path d="M0.4 5.1 C1.9 1.9 4.1 0.1 6.6 0.1 C9.1 0.1 11.3 1.9 12.8 5.1 C11.3 8.3 9.1 10.1 6.6 10.1 C4.1 10.1 1.9 8.3 0.4 5.1 Z" fill="#5584ee"/><circle cx="6.6" cy="5.1" r="3.1" fill="#fff"/><circle cx="6.7" cy="5.2" r="2.1" fill="#5584ee"/><path d="M4.6 5.1 A2 2 0 0 1 6.6 3.1 L6.6 5.1 Z" fill="#fff" opacity="0.55"/></svg>
<div class="t" style="left:371.8px;width:200px;text-align:center;top:709.83px;font-size:11.5px;line-height:14.38px;color:#767676;letter-spacing:0.25px;-webkit-text-stroke:0.2px #767676;">Factura 2406_5</div>
<div class="t" style="left:514.1px;width:200px;text-align:center;top:709.83px;font-size:11.5px;line-height:14.38px;color:#767676;letter-spacing:0.25px;-webkit-text-stroke:0.2px #767676;">Proveedor2406</div>
<div class="t" style="left:665.0px;width:200px;text-align:center;top:709.83px;font-size:11.5px;line-height:14.38px;color:#767676;letter-spacing:0.6px;-webkit-text-stroke:0.2px #767676;">24/06/2024</div>
<div class="t" style="left:858.0px;width:200px;text-align:center;top:709.83px;font-size:11.5px;line-height:14.38px;color:#767676;letter-spacing:0.6px;-webkit-text-stroke:0.2px #767676;">13/06/2024</div>
<div class="t" style="left:1039.0px;width:200px;text-align:center;top:709.83px;font-size:11.5px;line-height:14.38px;color:#767676;letter-spacing:1.2px;-webkit-text-stroke:0.2px #767676;">--</div>
<div class="t" style="left:1195.0px;width:200px;text-align:center;top:709.83px;font-size:11.5px;line-height:14.38px;color:#767676;letter-spacing:0.25px;-webkit-text-stroke:0.2px #767676;">ARS 5,000.00</div>
<div class="t" style="left:1376.0px;width:200px;text-align:center;top:709.83px;font-size:11.5px;line-height:14.38px;color:#767676;letter-spacing:0.25px;-webkit-text-stroke:0.2px #767676;">ARS 4,933.33</div>
<div style="position:absolute;left:1601px;top:706px;width:90px;height:23px;border-radius:7px;background:#f7faf8"></div>
<div class="t" style="left:1600.5px;width:90px;text-align:center;top:709.83px;font-size:11.5px;line-height:14.38px;color:#3f8f6e;letter-spacing:0.25px;-webkit-text-stroke:0.2px #3f8f6e;">Aprobada</div>
<div style="position:absolute;left:1756px;top:704px;width:26px;height:27px;border-radius:6px;background:#f4f8f6"></div>
<svg style="position:absolute;left:1763px;top:711.5px" width="14" height="13" viewBox="0 0 14 13"><path d="M0.9 0.5 H5.6 L8.1 3 V11.6 H0.9 Q0 11.6 0 10.7 V1.4 Q0 0.5 0.9 0.5 Z" fill="#2b9c8f"/><path d="M5.5 0.2 L8.4 3.1" stroke="#f4f8f6" stroke-width="0.8"/><circle cx="9.7" cy="8.4" r="3.9" fill="#f4f8f6"/><circle cx="9.7" cy="8.4" r="3.1" fill="#2b9c8f"/><path d="M8.3 8.6 L9.3 9.4 L11.1 7.6" fill="none" stroke="#f4f8f6" stroke-width="0.9"/></svg>
<div style="position:absolute;left:301px;top:747px;width:1522px;height:45px;border:1px solid #e4e6eb;border-radius:9px;background:#fff"></div>
<svg style="position:absolute;left:341.8px;top:764.5px" width="14" height="11" viewBox="0 0 14 11"><path d="M0.4 5.1 C1.9 1.9 4.1 0.1 6.6 0.1 C9.1 0.1 11.3 1.9 12.8 5.1 C11.3 8.3 9.1 10.1 6.6 10.1 C4.1 10.1 1.9 8.3 0.4 5.1 Z" fill="#5584ee"/><circle cx="6.6" cy="5.1" r="3.1" fill="#fff"/><circle cx="6.7" cy="5.2" r="2.1" fill="#5584ee"/><path d="M4.6 5.1 A2 2 0 0 1 6.6 3.1 L6.6 5.1 Z" fill="#fff" opacity="0.55"/></svg>
<div class="t" style="left:371.8px;width:200px;text-align:center;top:762.83px;font-size:11.5px;line-height:14.38px;color:#767676;letter-spacing:0.25px;-webkit-text-stroke:0.2px #767676;">Factura 2406</div>
<div class="t" style="left:514.1px;width:200px;text-align:center;top:762.83px;font-size:11.5px;line-height:14.38px;color:#767676;letter-spacing:0.25px;-webkit-text-stroke:0.2px #767676;">Proveedor2406</div>
<div class="t" style="left:665.0px;width:200px;text-align:center;top:762.83px;font-size:11.5px;line-height:14.38px;color:#767676;letter-spacing:0.6px;-webkit-text-stroke:0.2px #767676;">24/06/2024</div>
<div class="t" style="left:858.0px;width:200px;text-align:center;top:762.83px;font-size:11.5px;line-height:14.38px;color:#767676;letter-spacing:0.6px;-webkit-text-stroke:0.2px #767676;">24/07/2024</div>
<div class="t" style="left:1039.0px;width:200px;text-align:center;top:762.83px;font-size:11.5px;line-height:14.38px;color:#767676;letter-spacing:0.6px;-webkit-text-stroke:0.2px #767676;">24/06/2024</div>
<div class="t" style="left:1195.0px;width:200px;text-align:center;top:762.83px;font-size:11.5px;line-height:14.38px;color:#767676;letter-spacing:0.25px;-webkit-text-stroke:0.2px #767676;">ARS 800,000.00</div>
<div class="t" style="left:1376.0px;width:200px;text-align:center;top:762.83px;font-size:11.5px;line-height:14.38px;color:#767676;letter-spacing:0.25px;-webkit-text-stroke:0.2px #767676;">ARS 789,333.33</div>
<div style="position:absolute;left:1601px;top:759px;width:90px;height:23px;border-radius:7px;background:#e9fdfc"></div>
<div class="t" style="left:1600.5px;width:90px;text-align:center;top:762.83px;font-size:11.5px;line-height:14.38px;color:#23a096;letter-spacing:0.25px;-webkit-text-stroke:0.2px #23a096;">Pagada</div>
<div style="position:absolute;left:1756px;top:757px;width:26px;height:27px;border-radius:6px;background:#eeedfb"></div>
<svg style="position:absolute;left:1763px;top:764.5px" width="14" height="13" viewBox="0 0 14 13"><path d="M0.9 0.5 H5.6 L8.1 3 V11.6 H0.9 Q0 11.6 0 10.7 V1.4 Q0 0.5 0.9 0.5 Z" fill="#c6c4da"/><path d="M5.5 0.2 L8.4 3.1" stroke="#eeedfb" stroke-width="0.8"/><circle cx="9.7" cy="8.4" r="3.9" fill="#eeedfb"/><circle cx="9.7" cy="8.4" r="3.1" fill="#c6c4da"/><path d="M8.3 8.6 L9.3 9.4 L11.1 7.6" fill="none" stroke="#eeedfb" stroke-width="0.9"/></svg>
<div style="position:absolute;left:305px;top:834px;width:75px;height:34px;border-radius:6px;background:#dde9fb"></div>
<div class="t" style="left:305.0px;width:75px;text-align:center;top:842.40px;font-size:14px;line-height:17.5px;color:#5584ee;">Anterior</div>
<div class="t" style="left:963.0px;width:200px;text-align:center;top:842.83px;font-size:13.35px;line-height:16.69px;color:#1f2433;">Página 1 de 3</div>
<div style="position:absolute;left:1746px;top:834px;width:75px;height:34px;border-radius:6px;background:#5584ee"></div>
<div class="t" style="left:1746.0px;width:75px;text-align:center;top:842.37px;font-size:13px;line-height:16.25px;color:#fff;font-weight:bold;">Siguiente</div>
</body></html>
